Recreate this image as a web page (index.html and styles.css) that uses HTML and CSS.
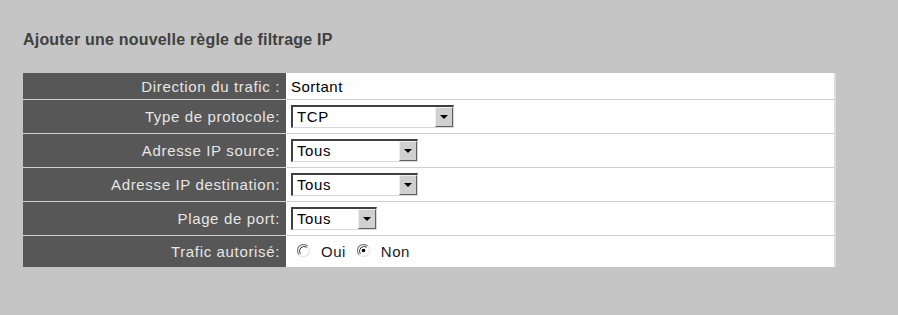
FILE: index.html
```html
<!DOCTYPE html>
<html lang="fr">
<head>
<meta charset="utf-8">
<title>Filtrage IP</title>
<link rel="stylesheet" href="styles.css">
</head>
<body>
<div class="page">
  <h1 class="title">Ajouter une nouvelle règle de filtrage IP</h1>
  <div class="form">
    <div class="row r1">
      <div class="label">Direction du trafic :</div>
      <div class="value">Sortant</div>
    </div>
    <div class="row">
      <div class="label">Type de protocole:</div>
      <div class="value"><span class="select w-lg"><span class="sel-text">TCP</span><span class="sel-btn"><span class="tri"></span></span></span></div>
    </div>
    <div class="row">
      <div class="label">Adresse IP source:</div>
      <div class="value"><span class="select w-md"><span class="sel-text">Tous</span><span class="sel-btn"><span class="tri"></span></span></span></div>
    </div>
    <div class="row">
      <div class="label">Adresse IP destination:</div>
      <div class="value"><span class="select w-md"><span class="sel-text">Tous</span><span class="sel-btn"><span class="tri"></span></span></span></div>
    </div>
    <div class="row">
      <div class="label">Plage de port:</div>
      <div class="value"><span class="select w-sm"><span class="sel-text">Tous</span><span class="sel-btn"><span class="tri"></span></span></span></div>
    </div>
    <div class="row r6">
      <div class="label">Trafic autorisé:</div>
      <div class="value radios">
        <span class="radio"><svg width="13" height="13" viewBox="0 0 13 13"><path d="M2.2 10.8 A6 6 0 0 1 10.8 2.2" fill="none" stroke="#808080" stroke-width="1.2"/><path d="M10.8 2.2 A6 6 0 0 1 2.2 10.8" fill="none" stroke="#e6e6e6" stroke-width="1.2"/><circle cx="6.5" cy="6.5" r="4.6" fill="#fff"/><path d="M3.3 9.7 A4.6 4.6 0 0 1 9.7 3.3" fill="none" stroke="#303030" stroke-width="1"/></svg></span>
        <span class="radio-text">Oui</span>
        <span class="radio"><svg width="13" height="13" viewBox="0 0 13 13"><path d="M2.2 10.8 A6 6 0 0 1 10.8 2.2" fill="none" stroke="#808080" stroke-width="1.2"/><path d="M10.8 2.2 A6 6 0 0 1 2.2 10.8" fill="none" stroke="#e6e6e6" stroke-width="1.2"/><circle cx="6.5" cy="6.5" r="4.6" fill="#fff"/><path d="M3.3 9.7 A4.6 4.6 0 0 1 9.7 3.3" fill="none" stroke="#303030" stroke-width="1"/><circle cx="6.5" cy="6.5" r="1.8" fill="#000"/></svg></span>
        <span class="radio-text">Non</span>
      </div>
    </div>
  </div>
</div>
</body>
</html>
```

FILE: styles.css
```css
html, body {
  margin: 0;
  padding: 0;
  background: #c5c5c5;
}
body {
  font-family: "Liberation Sans", Arial, sans-serif;
  width: 898px;
  height: 315px;
  overflow: hidden;
}
.page {
  padding: 30px 0 0 23px;
}
.title {
  margin: 0;
  font-size: 16px;
  font-weight: bold;
  letter-spacing: 0.2px;
  color: #404040;
  line-height: 20px;
  height: 43px;
}
.form {
  width: 813px;
  display: flex;
  flex-direction: column;
  border-right: 2px solid #dcdcdc;
  box-sizing: border-box;
}
.row {
  display: grid;
  grid-template-columns: 263px 1fr;
  height: 34px;
  border-bottom: 1px solid #cfcfcf;
  box-sizing: border-box;
}
.row.r1 { height: 27px; }
.row.r6 { height: 31px; border-bottom: none; }
.label {
  background: #575757;
  color: #e6e6e6;
  font-size: 15px;
  letter-spacing: 0.65px;
  text-align: right;
  padding-right: 6px;
  display: flex;
  align-items: center;
  justify-content: flex-end;
}
.value {
  background: #fefefe;
  color: #000;
  font-size: 15px;
  letter-spacing: 0.5px;
  padding-left: 5px;
  display: flex;
  align-items: center;
}
.select {
  display: flex;
  height: 23px;
  box-sizing: border-box;
  border-top: 2px solid #404040;
  border-left: 2px solid #404040;
  border-right: 1px solid #d8d8d8;
  border-bottom: 1px solid #d8d8d8;
  background: #fff;
}
.w-lg { width: 163px; }
.w-md { width: 127px; }
.w-sm { width: 86px; }
.sel-text {
  flex: 1;
  padding-left: 4px;
  font-size: 15px;
  letter-spacing: 0.6px;
  line-height: 20px;
  color: #000;
}
.sel-btn {
  width: 18px;
  background: #d0d0d0;
  border-right: 1px solid #606060;
  border-bottom: 1px solid #606060;
  border-left: 1px solid #f0f0f0;
  border-top: 1px solid #f0f0f0;
  box-sizing: border-box;
  display: flex;
  align-items: center;
  justify-content: center;
}
.tri {
  width: 0;
  height: 0;
  border-left: 4px solid transparent;
  border-right: 4px solid transparent;
  border-top: 4px solid #000;
}
.radios {
  padding-left: 11px;
}
.radio {
  display: inline-flex;
  width: 13px;
  height: 13px;
  margin-top: -2px;
}
.radio-text {
  margin-left: 11px;
  margin-right: 11px;
  font-size: 15px;
  color: #222;
}
```
